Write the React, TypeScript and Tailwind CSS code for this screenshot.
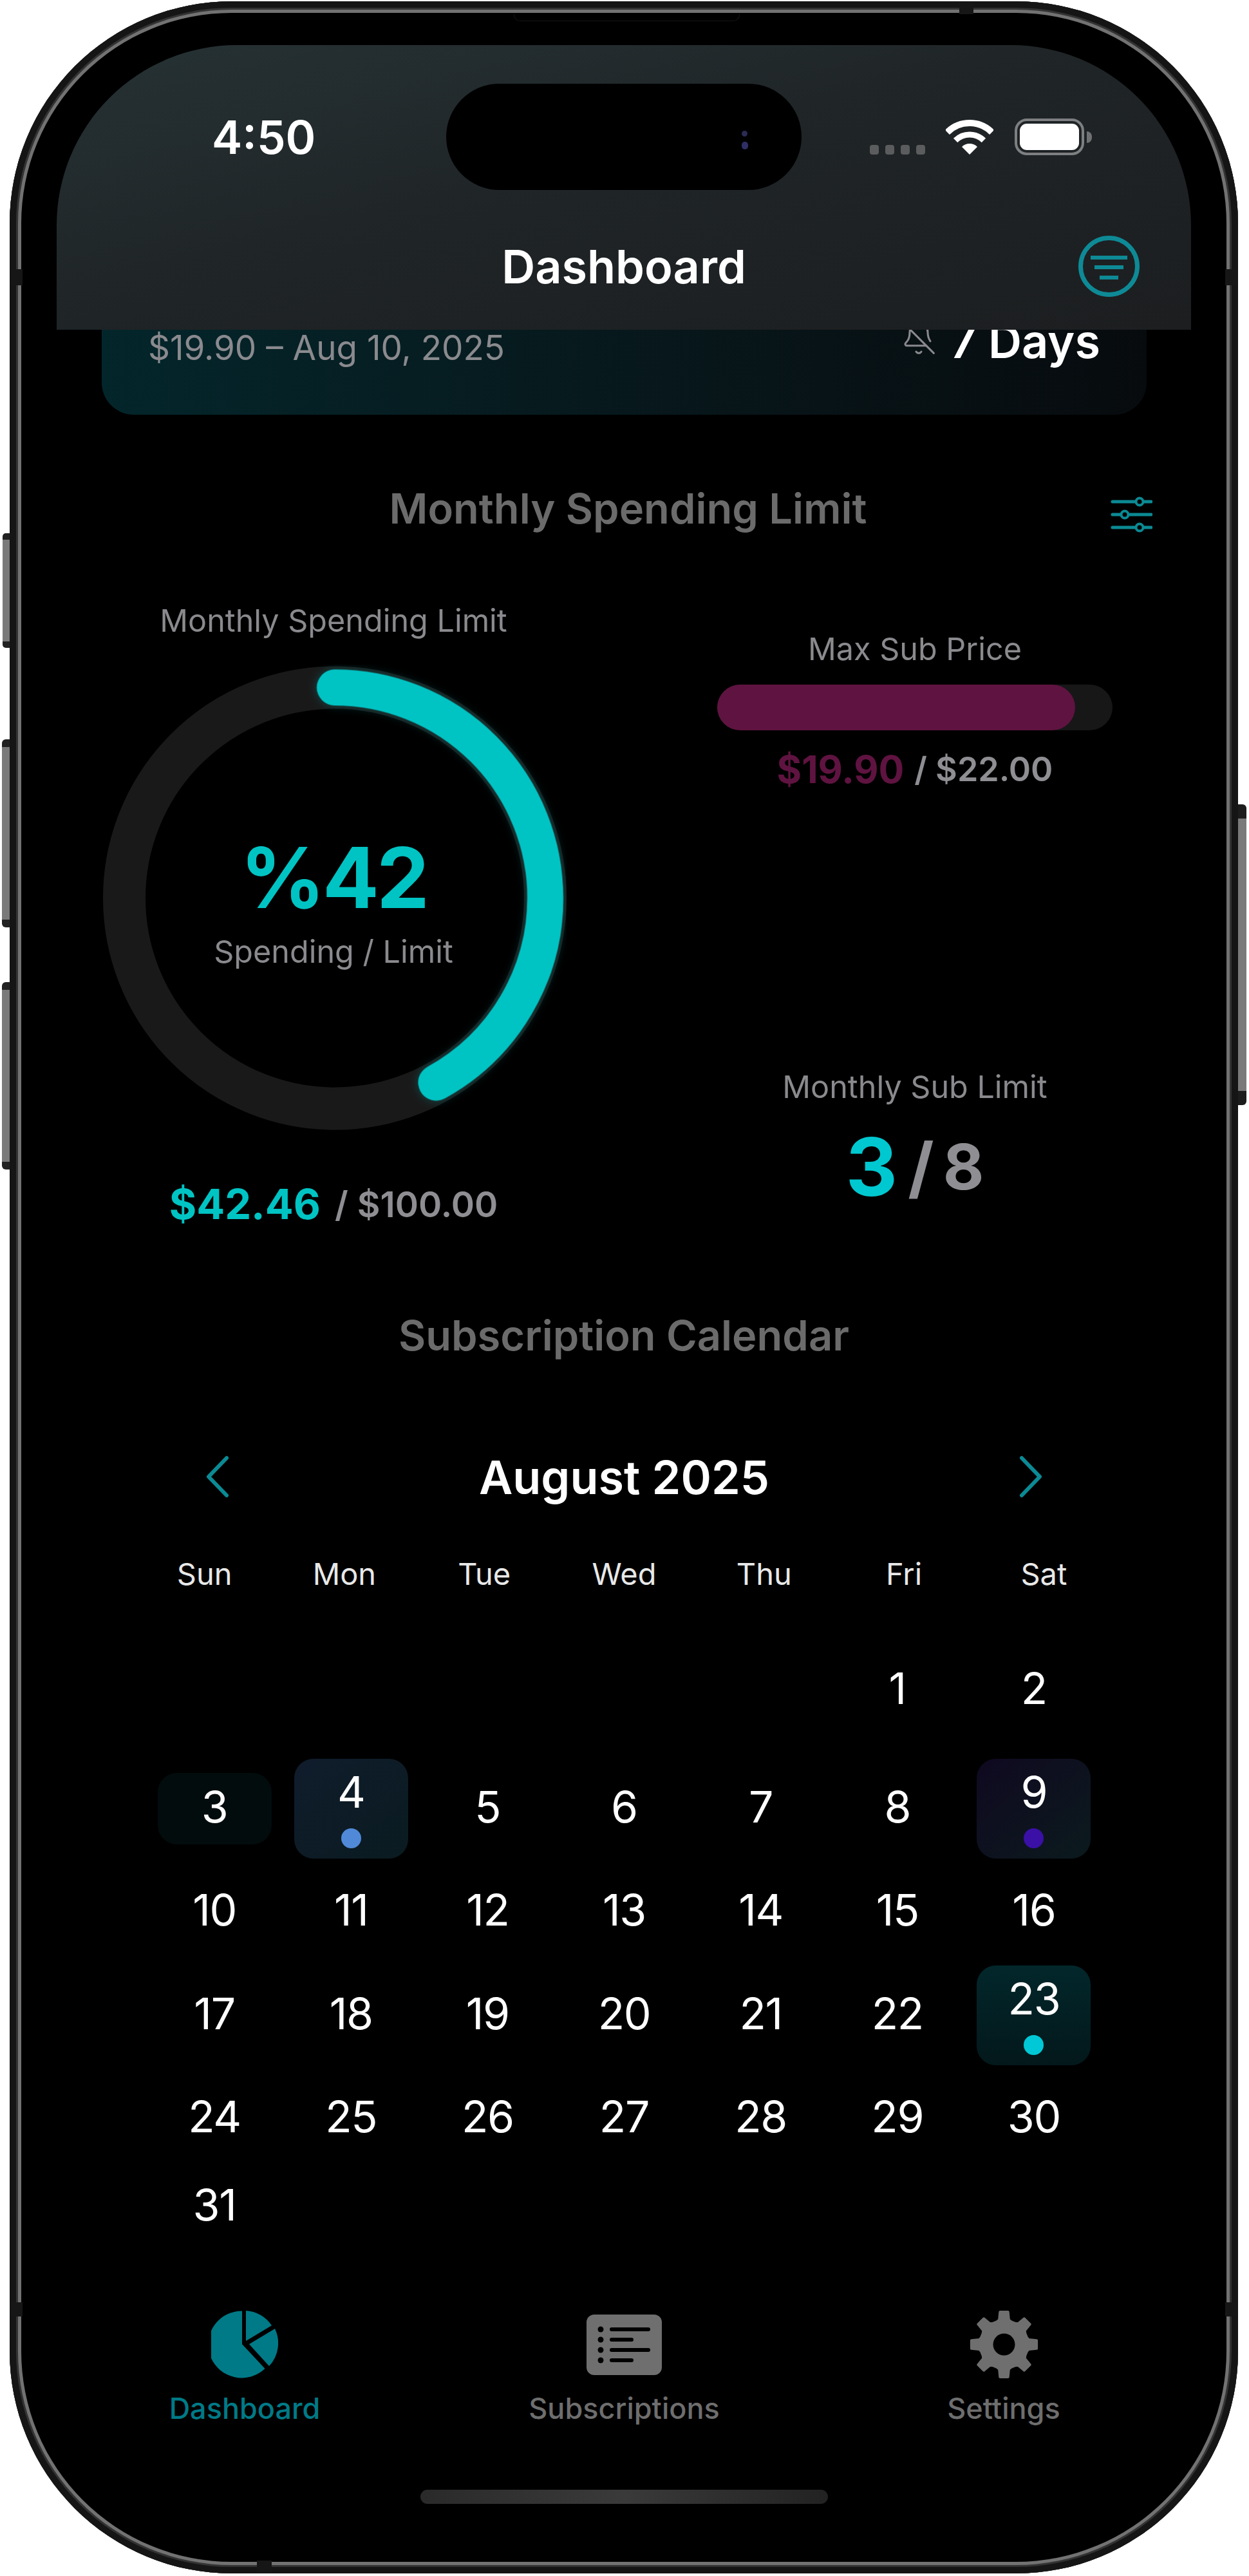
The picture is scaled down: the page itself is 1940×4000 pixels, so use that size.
import { BellOff } from "lucide-react";

type Day = {
  n: number;
  box?: string;
  dot?: string;
};

const weekDays = ["Sun", "Mon", "Tue", "Wed", "Thu", "Fri", "Sat"];

// one entry per calendar row, null = empty slot
const rows: { gap: string; height: string; days: (Day | null)[] }[] = [
  {
    gap: "mt-[95px]",
    height: "h-[111px]",
    days: [null, null, null, null, null, { n: 1 }, { n: 2 }],
  },
  {
    gap: "mt-[51px]",
    height: "h-[155px]",
    days: [
      { n: 3, box: "bg-[#030c0d]" },
      { n: 4, box: "bg-gradient-to-br from-[#101c2c] to-[#0a1b20]", dot: "bg-[#5089d8]" },
      { n: 5 },
      { n: 6 },
      { n: 7 },
      { n: 8 },
      { n: 9, box: "bg-gradient-to-br from-[#0f0820] to-[#0a1a1d]", dot: "bg-[#3a10a6]" },
    ],
  },
  {
    gap: "mt-[27px]",
    height: "h-[111px]",
    days: [{ n: 10 }, { n: 11 }, { n: 12 }, { n: 13 }, { n: 14 }, { n: 15 }, { n: 16 }],
  },
  {
    gap: "mt-[28px]",
    height: "h-[155px]",
    days: [
      { n: 17 },
      { n: 18 },
      { n: 19 },
      { n: 20 },
      { n: 21 },
      { n: 22 },
      { n: 23, box: "bg-gradient-to-b from-[#02272b] to-[#03181b]", dot: "bg-[#00c8d6]" },
    ],
  },
  {
    gap: "mt-[27px]",
    height: "h-[111px]",
    days: [{ n: 24 }, { n: 25 }, { n: 26 }, { n: 27 }, { n: 28 }, { n: 29 }, { n: 30 }],
  },
  {
    gap: "mt-[26px]",
    height: "h-[111px]",
    days: [{ n: 31 }, null, null, null, null, null, null],
  },
];

function gearPath() {
  const pts: string[] = [];
  for (let i = 0; i < 8; i++) {
    const a = i * 45 - 90;
    const add = (r: number, deg: number) => {
      const t = ((a + deg) * Math.PI) / 180;
      pts.push(`${(53.5 + r * Math.cos(t)).toFixed(1)} ${(53.5 + r * Math.sin(t)).toFixed(1)}`);
    };
    add(37, -17);
    add(39, -11);
    add(51, -7);
    add(51, 7);
    add(39, 11);
    add(37, 17);
  }
  return "M" + pts.join("L") + "Z";
}

function Wifi() {
  return (
    <svg width="74" height="54" viewBox="0 0 74 54" fill="none" stroke="#fff">
      <path d="M2.4 19.4A49 49 0 0 1 71.6 19.4" strokeWidth="10" />
      <path d="M15.1 32A31 31 0 0 1 58.9 32" strokeWidth="9" />
      <path d="M37 54L25 42A17 17 0 0 1 49 42Z" fill="#fff" stroke="none" />
    </svg>
  );
}

function Battery() {
  return (
    <div className="flex items-center">
      <div className="w-[108px] h-[57px] rounded-[19px] border-[4px] border-[#7d7f80] p-[4px]">
        <div className="w-full h-full rounded-[11px] bg-white" />
      </div>
      <div className="ml-[4px] w-[8px] h-[18px] rounded-r-full bg-[#6f7172]" />
    </div>
  );
}

function FilterIcon() {
  return (
    <svg width="95" height="95" viewBox="0 0 95 95" fill="none" stroke="#0e8a96">
      <circle cx="47.5" cy="47.5" r="44" strokeWidth="7" />
      <path d="M19 34H76M25 49H70M33 65H62" strokeWidth="6" />
    </svg>
  );
}

function SlidersIcon() {
  return (
    <svg width="67" height="60" viewBox="0 0 67 60" fill="none" stroke="#0b8a94" strokeLinecap="round">
      <path d="M5 10H65M5 30H65M5 50H65" strokeWidth="5" />
      <circle cx="47" cy="10" r="5.5" fill="#000" strokeWidth="4" />
      <circle cx="24" cy="30" r="5.5" fill="#000" strokeWidth="4" />
      <circle cx="47" cy="50" r="5.5" fill="#000" strokeWidth="4" />
    </svg>
  );
}

function Donut() {
  return (
    <div className="relative w-[724px] h-[724px]">
      <svg width="724" height="724" viewBox="0 0 724 724" fill="none">
        <circle cx="364" cy="362.5" r="327" stroke="#191919" strokeWidth="66" />
        <circle
          cx="364"
          cy="362.5"
          r="327"
          stroke="#00c4c4"
          strokeWidth="56"
          strokeLinecap="round"
          pathLength={100}
          strokeDasharray="42 100"
          transform="rotate(-90 364 362.5)"
          className="drop-shadow-[0_0_7px_rgba(0,196,196,0.3)]"
        />
      </svg>
      <div className="absolute inset-0 flex flex-col items-center justify-center pt-[17px]">
        <div className="text-[130px] leading-[130px] font-bold tracking-[-0.03em] text-[#00c4c4]">%42</div>
        <div className="mt-[20px] text-[48.5px] leading-[60px] text-[#8a8a8e]">Spending / Limit</div>
      </div>
    </div>
  );
}

function PieIcon() {
  return (
    <svg width="104" height="107" viewBox="0 0 104 107" fill="#007a87">
      <path d="M48 1.5L48 53L83.5 91A52 52 0 1 1 48 1.5Z" />
      <path d="M54 1A52 52 0 0 1 94 24L54 48Z" />
      <path d="M59 53L99 29A52 52 0 0 1 90 87Z" />
    </svg>
  );
}

function ListIcon() {
  return (
    <svg width="117" height="94" viewBox="0 0 117 94">
      <rect width="117" height="94" rx="12" fill="#6f6f6f" />
      <g fill="#000">
        <circle cx="22" cy="23" r="4.5" />
        <circle cx="22" cy="39" r="4.5" />
        <circle cx="22" cy="55" r="4.5" />
        <circle cx="22" cy="71" r="4.5" />
        <rect x="36" y="20" width="63" height="6" rx="3" />
        <rect x="36" y="36" width="37" height="6" rx="3" />
        <rect x="36" y="52" width="63" height="6" rx="3" />
        <rect x="36" y="68" width="37" height="6" rx="3" />
      </g>
    </svg>
  );
}

function GearIcon() {
  return (
    <svg width="107" height="107" viewBox="0 0 107 107">
      <path d={gearPath()} fill="#6f6f6f" stroke="#6f6f6f" strokeWidth="4" strokeLinejoin="round" />
      <circle cx="53.5" cy="53.5" r="17" fill="#000" />
    </svg>
  );
}

function DayCell({ day }: { day: Day | null }) {
  if (!day) return <div />;
  const number = (
    <span className="text-[68px] leading-[80px] text-white tracking-[-0.02em]">{day.n}</span>
  );
  return (
    <div className="flex items-center justify-center">
      {day.dot ? (
        <div className={`w-[177px] h-[155px] rounded-[30px] flex flex-col items-center pt-[11px] ${day.box}`}>
          {number}
          <div className={`mt-[17px] w-[31px] h-[31px] rounded-full ${day.dot}`} />
        </div>
      ) : (
        <div className={`w-[177px] h-[111px] rounded-[30px] flex items-center justify-center pb-[8px] ${day.box ?? ""}`}>
          {number}
        </div>
      )}
    </div>
  );
}

export default function App() {
  return (
    <div className="relative w-[1940px] h-[4000px] bg-white pl-[15px] pt-[2px] [font-family:Inter,sans-serif] overflow-hidden">
      {/* side buttons */}
      <div className="absolute left-[4px] top-[828px] w-[11px] h-[178px] rounded-l-[5px] bg-[#7a7a7a] border-y-[10px] border-[#222]" />
      <div className="absolute left-[3px] top-[1148px] w-[12px] h-[292px] rounded-l-[6px] bg-[#7a7a7a] border-y-[12px] border-[#222]" />
      <div className="absolute left-[3px] top-[1525px] w-[12px] h-[291px] rounded-l-[6px] bg-[#7a7a7a] border-y-[12px] border-[#222]" />
      <div className="absolute left-[1923px] top-[1249px] w-[13px] h-[467px] rounded-r-[6px] bg-[#7a7a7a] border-y-[22px] border-[#1c1c1c]" />

      {/* phone */}
      <div className="relative w-[1908px] h-[3994px] rounded-[345px] bg-black shadow-[inset_0_0_0_10px_#151515,inset_0_0_0_13px_#333,inset_0_0_0_18px_#727272]">
        {/* antenna bands */}
        <div className="absolute left-0 top-[416px] w-[20px] h-[25px] bg-[#161616]" />
        <div className="absolute right-0 top-[416px] w-[20px] h-[25px] bg-[#161616]" />
        <div className="absolute left-0 top-[3573px] w-[20px] h-[22px] bg-[#161616]" />
        <div className="absolute right-0 top-[3573px] w-[20px] h-[22px] bg-[#161616]" />
        <div className="absolute left-[1475px] top-0 w-[22px] h-[20px] bg-[#161616]" />
        <div className="absolute left-[384px] bottom-0 w-[23px] h-[20px] bg-[#161616]" />
        {/* speaker */}
        <div className="absolute left-[783px] top-[20px] w-[351px] h-[11px] rounded-b-[10px] border border-t-0 border-[#141414]" />

        {/* screen */}
        <div className="relative mx-[73px] pt-[68px] h-full">
          {/* top bar, content scrolls under it */}
          <div className="absolute z-10 left-0 right-0 top-[68px] h-[442px] rounded-t-[280px] bg-gradient-to-br from-[#263235] via-[#1f2426] to-[#1c1e20]">
            <div className="flex items-center pl-[241px] pt-[60px]">
              <div className="w-[364px] text-[71px] leading-[80px] font-semibold text-white">4:50</div>
              <div className="relative w-[552px] h-[165px] rounded-full bg-black">
                <div className="absolute left-[459px] top-[73px] w-[9px] h-[9px] rounded-full bg-[#2b2b55]" />
                <div className="absolute left-[459px] top-[90px] w-[10px] h-[12px] rounded-full bg-[#2f2f66]" />
              </div>
              <div className="ml-[106px] flex items-end gap-[10px] h-[15px] self-center mt-[39px]">
                <div className="w-[14px] h-[15px] rounded-[4px] bg-[#5a5c5d]" />
                <div className="w-[14px] h-[15px] rounded-[4px] bg-[#5a5c5d]" />
                <div className="w-[14px] h-[15px] rounded-[4px] bg-[#5a5c5d]" />
                <div className="w-[14px] h-[15px] rounded-[4px] bg-[#5a5c5d]" />
              </div>
              <div className="ml-[32px]">
                <Wifi />
              </div>
              <div className="ml-[33px]">
                <Battery />
              </div>
            </div>
            <div className="mt-[71px] flex items-center h-[95px]">
              <div className="flex-1" />
              <div className="text-[72px] leading-[95px] font-semibold text-white">Dashboard</div>
              <div className="flex-1 flex justify-end">
                <div className="mr-[80px]">
                  <FilterIcon />
                </div>
              </div>
            </div>
          </div>

          {/* next renewal card */}
          <div className="mt-[214px] ml-[70px] mr-[69px] h-[360px] rounded-b-[50px] bg-gradient-to-r from-[#03262b] to-[#070b0e] flex items-end justify-between px-[72px] pb-[69px]">
            <div className="text-[53px] leading-[70px] text-[#8a8a8e]">$19.90 – Aug 10, 2025</div>
            <div className="flex items-end gap-[20px]">
              <BellOff className="w-[56px] h-[56px] text-[#8a8a8e] mb-[22px]" strokeWidth={1.3} />
              <div className="text-[72px] leading-[90px] font-semibold text-white">7 Days</div>
            </div>
          </div>

          {/* limits */}
          <div className="mt-[101px] flex items-center h-[90px]">
            <div className="flex-1" />
            <div className="ml-[13px] text-[65px] leading-[90px] font-semibold text-[#6b6b6b]">Monthly Spending Limit</div>
            <div className="flex-1 flex justify-end">
              <div className="mr-[60px] mt-[18px]">
                <SlidersIcon />
              </div>
            </div>
          </div>

          <div className="mt-[99px] flex">
            <div className="w-[860px] flex flex-col items-center">
              <div className="text-[48.5px] leading-[60px] text-[#8a8a8e]">Monthly Spending Limit</div>
              <div className="mt-[38px]">
                <Donut />
              </div>
              <div className="mt-[84px] flex items-center leading-[60px]">
                <span className="text-[65px] font-bold text-[#00c4c4]">$42.46</span>
                <span className="ml-[22px] text-[55px] font-semibold text-[#8e8e93]">/ $100.00</span>
              </div>
            </div>

            <div className="ml-[44px] w-[858px] flex flex-col items-center">
              <div className="mt-[44px] text-[48.5px] leading-[60px] text-[#8a8a8e]">Max Sub Price</div>
              <div className="mt-[25px] w-[614px] h-[71px] rounded-full bg-[#171717]">
                <div className="w-[556px] h-full rounded-full bg-[#5f1340]" />
              </div>
              <div className="mt-[31px] flex items-center leading-[60px]">
                <span className="text-[59px] font-bold text-[#5f1340]">$19.90</span>
                <span className="ml-[16px] text-[52px] font-semibold text-[#8e8e93]">/ $22.00</span>
              </div>
              <div className="mt-[433px] text-[48.5px] leading-[60px] text-[#8a8a8e]">Monthly Sub Limit</div>
              <div className="mt-[31px] flex items-center h-[125px]">
                <span className="text-[125px] leading-none font-bold text-[#00c8d0]">3</span>
                <span className="ml-[16px] text-[104px] leading-none font-bold text-[#8e8e93]">/</span>
                <span className="ml-[14px] text-[98px] leading-none font-bold text-[#8e8e93]">8</span>
              </div>
            </div>
          </div>

          {/* calendar */}
          <div className="mt-[129px] h-[90px] text-center text-[65px] leading-[90px] font-semibold text-[#6b6b6b]">
            Subscription Calendar
          </div>

          <div className="mt-[130px] ml-[232px] mr-[231px] h-[90px] flex items-center justify-between">
            <svg width="36" height="66" viewBox="0 0 36 66" fill="none" stroke="#0b8a94" strokeWidth="6" strokeLinecap="round" strokeLinejoin="round" className="-mt-[2px]">
              <path d="M32 4L4 33L32 62" />
            </svg>
            <div className="text-[72px] leading-[90px] font-semibold text-white">August 2025</div>
            <svg width="36" height="66" viewBox="0 0 36 66" fill="none" stroke="#0b8a94" strokeWidth="6" strokeLinecap="round" strokeLinejoin="round" className="-mt-[2px]">
              <path d="M4 4L32 33L4 62" />
            </svg>
          </div>

          <div className="mt-[75px] ml-[121px] mr-[120px] grid grid-cols-7">
            {weekDays.map((d) => (
              <div key={d} className="text-center text-[47px] leading-[60px] text-[#e8e8e8]">
                {d}
              </div>
            ))}
          </div>

          <div className="ml-[139px] mr-[138px]">
            {rows.map((row) => (
              <div key={row.days.find(Boolean)?.n} className={`grid grid-cols-7 ${row.gap} ${row.height}`}>
                {row.days.map((day, i) => (
                  <DayCell key={i} day={day} />
                ))}
              </div>
            ))}
          </div>

          {/* tab bar */}
          <div className="mt-[105px] pl-[92px] pr-[91px] flex justify-between">
            <div className="w-[400px] flex flex-col items-center">
              <div className="h-[107px] flex items-center">
                <PieIcon />
              </div>
              <div className="mt-[16px] text-[45px] leading-[60px] font-medium text-[#007a87]">Dashboard</div>
            </div>
            <div className="w-[400px] flex flex-col items-center">
              <div className="h-[107px] flex items-center">
                <ListIcon />
              </div>
              <div className="mt-[16px] text-[45px] leading-[60px] font-medium text-[#6e6e6e]">Subscriptions</div>
            </div>
            <div className="w-[400px] flex flex-col items-center">
              <div className="h-[107px] flex items-center">
                <GearIcon />
              </div>
              <div className="mt-[16px] text-[45px] leading-[60px] font-medium text-[#6e6e6e]">Settings</div>
            </div>
          </div>

          <div className="mt-[96px] mx-auto w-[633px] h-[22px] rounded-full bg-gradient-to-r from-[#2a2a2a] via-[#3a3a3a] to-[#222]" />
        </div>
      </div>
    </div>
  );
}
